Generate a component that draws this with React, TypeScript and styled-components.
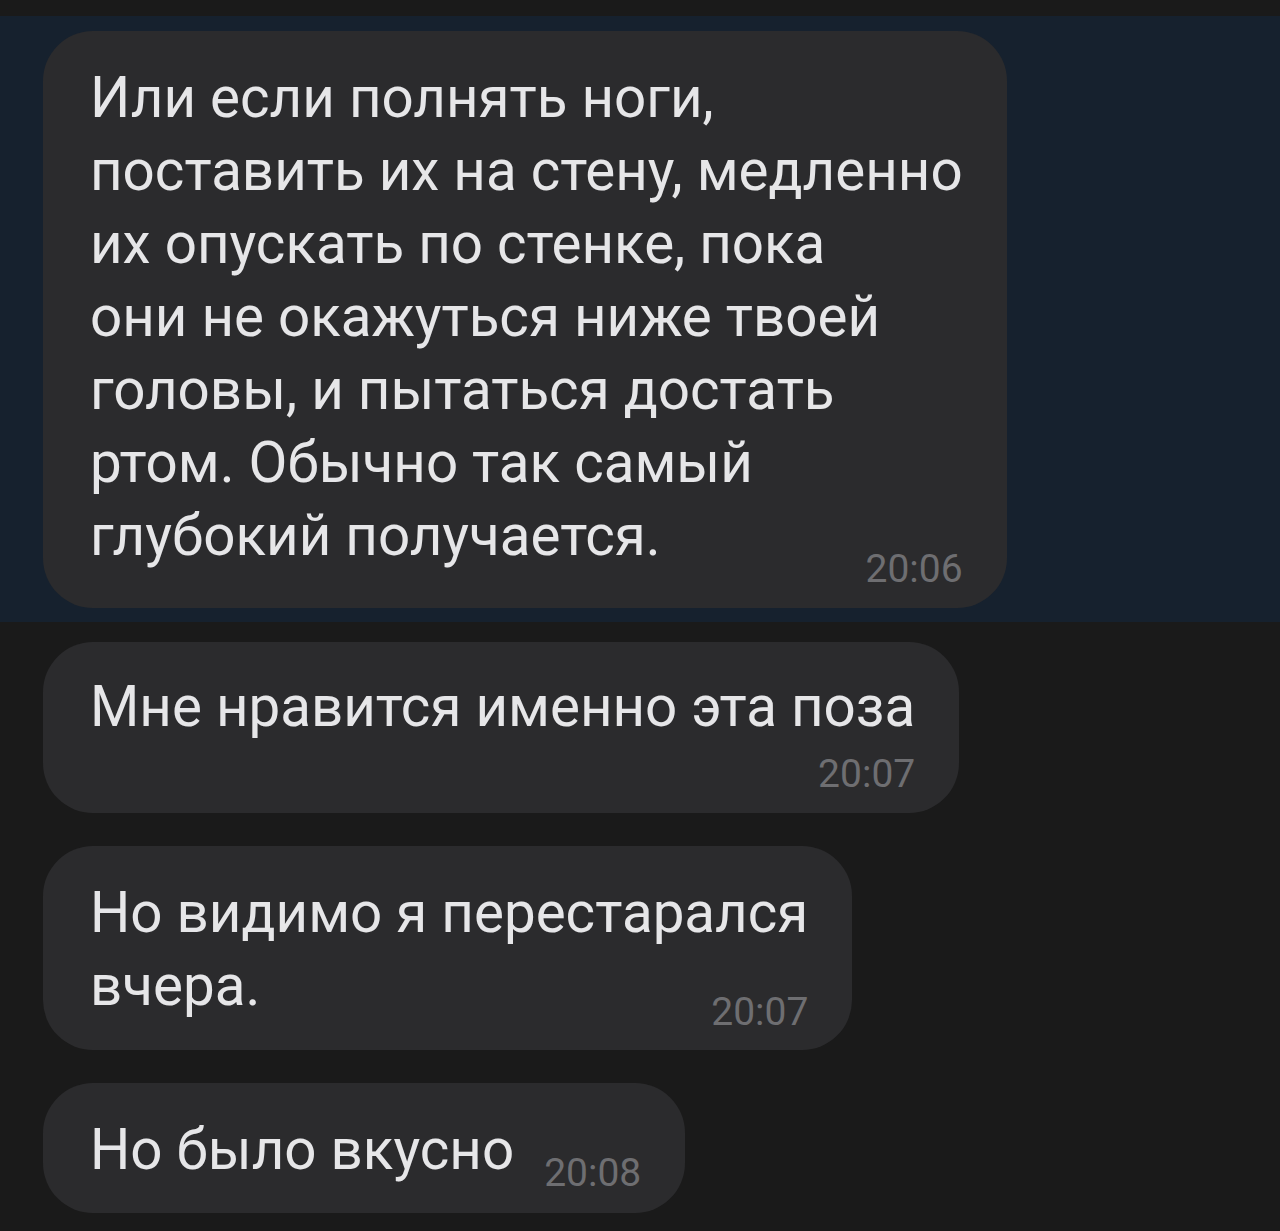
import styled, { createGlobalStyle } from 'styled-components';

const GlobalStyle = createGlobalStyle`
  html, body {
    margin: 0;
    padding: 0;
    background: #1a1a1a;
  }
  body {
    font-family: Roboto, "Noto Sans", "Liberation Sans", sans-serif;
  }
`;

type Message = {
  lines: string[];
  time: string;
  inline?: boolean;
  timeShift: number;
  padTop: number;
  padBottom: number;
  highlighted?: boolean;
};

const messages: Message[] = [
  {
    lines: [
      'Или если полнять ноги,',
      'поставить их на стену, медленно',
      'их опускать по стенке, пока',
      'они не окажуться ниже твоей',
      'головы, и пытаться достать',
      'ртом. Обычно так самый',
      'глубокий получается.',
    ],
    time: '20:06',
    timeShift: -21,
    padTop: 31,
    padBottom: 21,
    highlighted: true,
  },
  {
    lines: ['Мне нравится именно эта поза'],
    time: '20:07',
    timeShift: 13,
    padTop: 29,
    padBottom: 21,
  },
  {
    lines: ['Но видимо я перестарался', 'вчера.'],
    time: '20:07',
    timeShift: -28,
    padTop: 31,
    padBottom: 20,
  },
  {
    lines: ['Но было вкусно'],
    time: '20:08',
    inline: true,
    timeShift: -4,
    padTop: 31,
    padBottom: 26,
  },
];

function App() {
  return (
    <>
      <GlobalStyle />
      <Page>
        {messages.map((m, i) => (
          <Row key={i} $highlighted={m.highlighted}>
            <Bubble $inline={m.inline} $padTop={m.padTop} $padBottom={m.padBottom}>
              <Text>
                {m.lines.map((line, j) => (
                  <Line key={j}>{line}</Line>
                ))}
              </Text>
              <Time $inline={m.inline} $shift={m.timeShift}>
                {m.time}
              </Time>
            </Bubble>
          </Row>
        ))}
      </Page>
    </>
  );
}

export default App;

const Page = styled.div`
  min-height: 1231px;
  padding-top: 16px;
  background: #1a1a1a;
  display: flex;
  flex-direction: column;
`;

const Row = styled.div<{ $highlighted?: boolean }>`
  display: flex;
  padding: ${(p) => (p.$highlighted ? '15px 0 14px 43px' : '0 0 0 43px')};
  margin-bottom: ${(p) => (p.$highlighted ? '20px' : '33px')};
  background: ${(p) => (p.$highlighted ? '#16212e' : 'transparent')};
`;

const Bubble = styled.div<{ $inline?: boolean; $padTop: number; $padBottom: number }>`
  display: flex;
  flex-direction: ${(p) => (p.$inline ? 'row' : 'column')};
  align-items: ${(p) => (p.$inline ? 'flex-end' : 'stretch')};
  gap: ${(p) => (p.$inline ? '30px' : '0')};
  width: fit-content;
  background: #2b2b2d;
  border-radius: 50px;
  padding: ${(p) => `${p.$padTop}px 44px ${p.$padBottom}px 47px`};
`;

const Text = styled.div`
  color: #e6e6e8;
  font-size: 56.5px;
  line-height: 73px;
  white-space: nowrap;
`;

const Line = styled.div``;

const Time = styled.div<{ $inline?: boolean; $shift: number }>`
  align-self: flex-end;
  color: #6e6e71;
  font-size: 39px;
  line-height: 35px;
  margin-top: ${(p) => (p.$inline ? '0' : `${p.$shift}px`)};
  margin-bottom: ${(p) => (p.$inline ? `${p.$shift}px` : '0')};
`;
